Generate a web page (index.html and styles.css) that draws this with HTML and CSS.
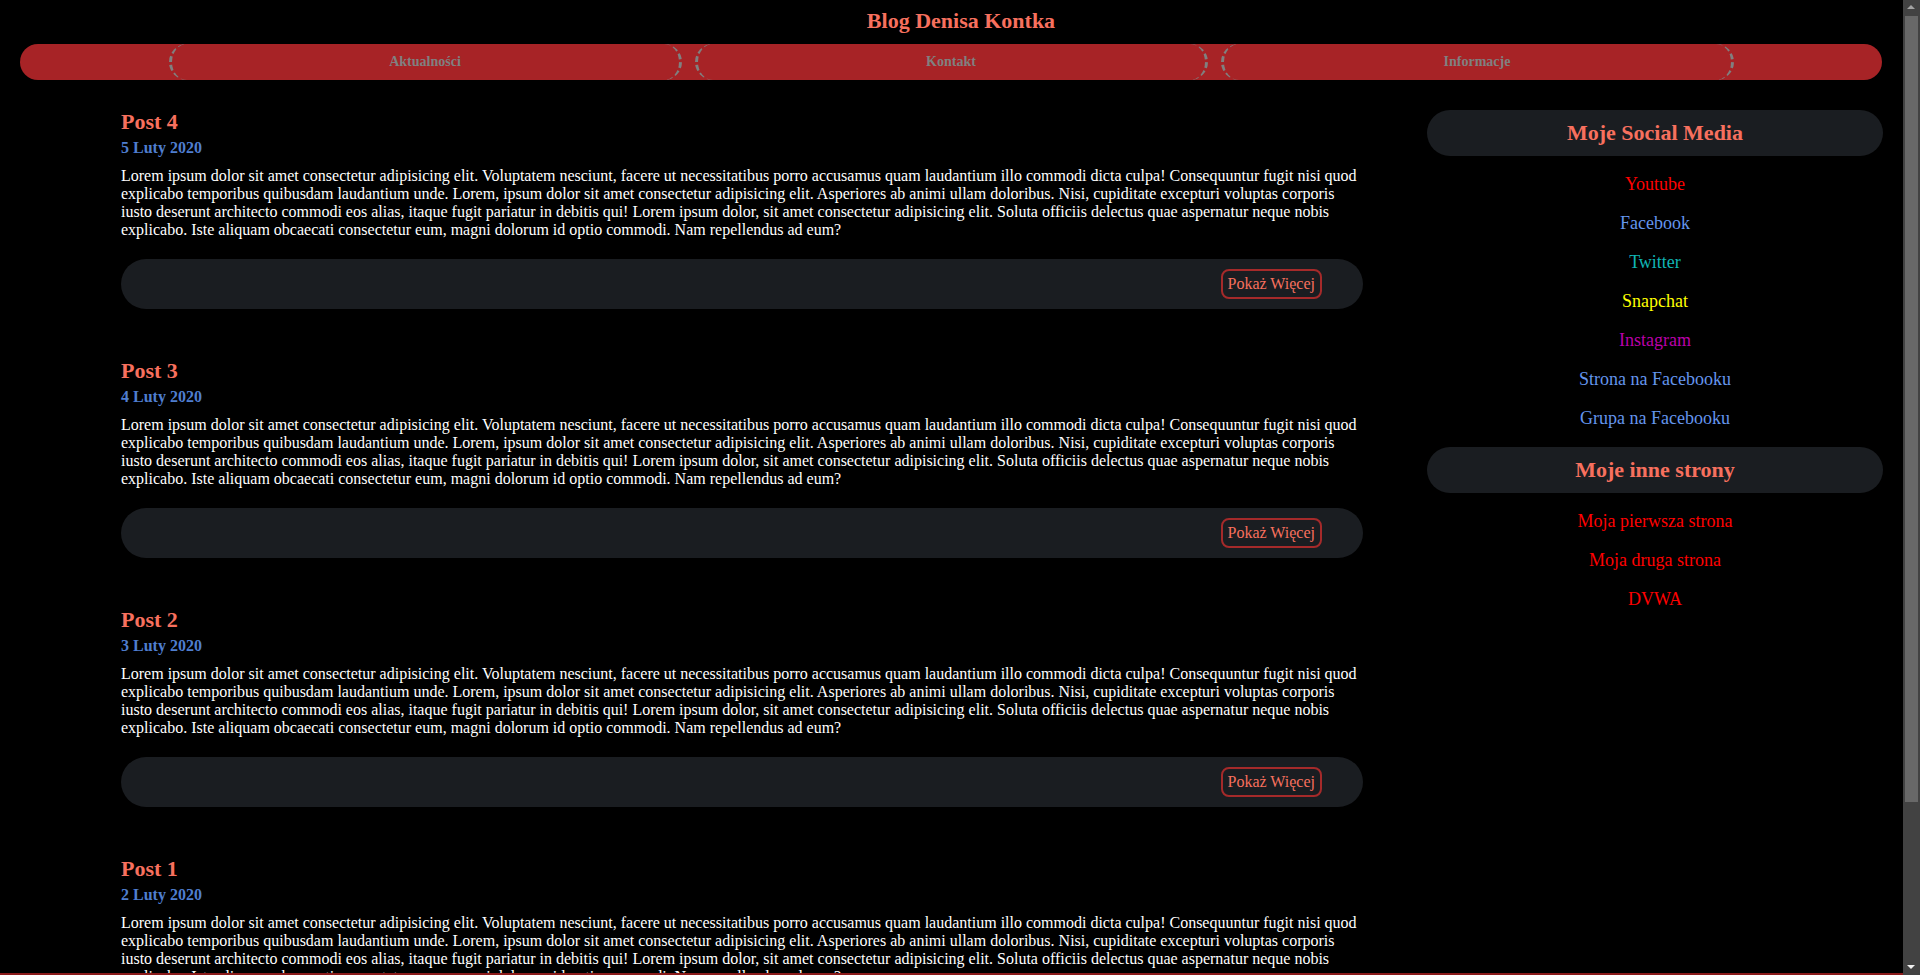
FILE: index.html
```html
<!DOCTYPE html>
<html lang="pl">
<head>
<meta charset="utf-8">
<title>Blog Denisa Kontka</title>
<link rel="stylesheet" href="styles.css">
</head>
<body>
<header class="site-header">
  <h1 class="site-title">Blog Denisa Kontka</h1>
  <nav class="nav">
    <ul class="nav-list">
      <li class="nav-item">Aktualności</li>
      <li class="nav-item">Kontakt</li>
      <li class="nav-item">Informacje</li>
    </ul>
  </nav>
</header>

<div class="layout">
  <main class="posts">
    <article class="post">
      <h2 class="post-title">Post 4</h2>
      <div class="post-date">5 Luty 2020</div>
      <p class="post-text">Lorem ipsum dolor sit amet consectetur adipisicing elit. Voluptatem nesciunt, facere ut necessitatibus porro accusamus quam laudantium illo commodi dicta culpa! Consequuntur fugit nisi quod explicabo temporibus quibusdam laudantium unde. Lorem, ipsum dolor sit amet consectetur adipisicing elit. Asperiores ab animi ullam doloribus. Nisi, cupiditate excepturi voluptas corporis iusto deserunt architecto commodi eos alias, itaque fugit pariatur in debitis qui! Lorem ipsum dolor, sit amet consectetur adipisicing elit. Soluta officiis delectus quae aspernatur neque nobis explicabo. Iste aliquam obcaecati consectetur eum, magni dolorum id optio commodi. Nam repellendus ad eum?</p>
      <div class="post-bar"><button class="more-btn">Pokaż Więcej</button></div>
    </article>
    <article class="post">
      <h2 class="post-title">Post 3</h2>
      <div class="post-date">4 Luty 2020</div>
      <p class="post-text">Lorem ipsum dolor sit amet consectetur adipisicing elit. Voluptatem nesciunt, facere ut necessitatibus porro accusamus quam laudantium illo commodi dicta culpa! Consequuntur fugit nisi quod explicabo temporibus quibusdam laudantium unde. Lorem, ipsum dolor sit amet consectetur adipisicing elit. Asperiores ab animi ullam doloribus. Nisi, cupiditate excepturi voluptas corporis iusto deserunt architecto commodi eos alias, itaque fugit pariatur in debitis qui! Lorem ipsum dolor, sit amet consectetur adipisicing elit. Soluta officiis delectus quae aspernatur neque nobis explicabo. Iste aliquam obcaecati consectetur eum, magni dolorum id optio commodi. Nam repellendus ad eum?</p>
      <div class="post-bar"><button class="more-btn">Pokaż Więcej</button></div>
    </article>
    <article class="post">
      <h2 class="post-title">Post 2</h2>
      <div class="post-date">3 Luty 2020</div>
      <p class="post-text">Lorem ipsum dolor sit amet consectetur adipisicing elit. Voluptatem nesciunt, facere ut necessitatibus porro accusamus quam laudantium illo commodi dicta culpa! Consequuntur fugit nisi quod explicabo temporibus quibusdam laudantium unde. Lorem, ipsum dolor sit amet consectetur adipisicing elit. Asperiores ab animi ullam doloribus. Nisi, cupiditate excepturi voluptas corporis iusto deserunt architecto commodi eos alias, itaque fugit pariatur in debitis qui! Lorem ipsum dolor, sit amet consectetur adipisicing elit. Soluta officiis delectus quae aspernatur neque nobis explicabo. Iste aliquam obcaecati consectetur eum, magni dolorum id optio commodi. Nam repellendus ad eum?</p>
      <div class="post-bar"><button class="more-btn">Pokaż Więcej</button></div>
    </article>
    <article class="post">
      <h2 class="post-title">Post 1</h2>
      <div class="post-date">2 Luty 2020</div>
      <p class="post-text">Lorem ipsum dolor sit amet consectetur adipisicing elit. Voluptatem nesciunt, facere ut necessitatibus porro accusamus quam laudantium illo commodi dicta culpa! Consequuntur fugit nisi quod explicabo temporibus quibusdam laudantium unde. Lorem, ipsum dolor sit amet consectetur adipisicing elit. Asperiores ab animi ullam doloribus. Nisi, cupiditate excepturi voluptas corporis iusto deserunt architecto commodi eos alias, itaque fugit pariatur in debitis qui! Lorem ipsum dolor, sit amet consectetur adipisicing elit. Soluta officiis delectus quae aspernatur neque nobis explicabo. Iste aliquam obcaecati consectetur eum, magni dolorum id optio commodi. Nam repellendus ad eum?</p>
      <div class="post-bar"><button class="more-btn">Pokaż Więcej</button></div>
    </article>
  </main>

  <aside class="sidebar">
    <div class="side-box"><h2 class="side-title">Moje Social Media</h2></div>
    <p class="side-link"><a class="link-youtube" href="#">Youtube</a></p>
    <p class="side-link"><a class="link-facebook" href="#">Facebook</a></p>
    <p class="side-link"><a class="link-twitter" href="#">Twitter</a></p>
    <p class="side-link"><a class="link-snapchat" href="#">Snapchat</a></p>
    <p class="side-link"><a class="link-instagram" href="#">Instagram</a></p>
    <p class="side-link"><a class="link-facebook" href="#">Strona na Facebooku</a></p>
    <p class="side-link"><a class="link-facebook" href="#">Grupa na Facebooku</a></p>
    <div class="side-box"><h2 class="side-title">Moje inne strony</h2></div>
    <p class="side-link"><a class="link-red" href="#">Moja pierwsza strona</a></p>
    <p class="side-link"><a class="link-red" href="#">Moja druga strona</a></p>
    <p class="side-link"><a class="link-red" href="#">DVWA</a></p>
  </aside>
</div>
<div class="bottom-line"></div>
<div class="scrollbar" aria-hidden="true">
  <span class="scroll-arrow-up"></span>
  <span class="scroll-thumb"></span>
  <span class="scroll-arrow-down"></span>
</div>
</body>
</html>
```

FILE: styles.css
```css
:root {
  color-scheme: dark;
}

body {
  margin: 8px 25px 8px 8px;
  background: #000;
  color: #fff;
  font-family: "Liberation Serif", "Times New Roman", serif;
  font-size: 16px;
}

.site-title {
  margin: 0;
  padding-left: 19px;
  text-align: center;
  font-size: 22px;
  font-weight: bold;
  color: #f7705e;
  line-height: normal;
}

.nav {
  margin: 10px 13px 0 12px;
  height: 36px;
  background: #a72326;
  border-radius: 18px;
}

.nav-list {
  list-style: none;
  margin: 0;
  padding: 0;
  height: 100%;
  display: flex;
  justify-content: center;
  gap: 13px;
}

.nav-item {
  box-sizing: border-box;
  width: 513px;
  height: 36px;
  border-left: 3px dashed #808080;
  border-right: 3px dashed #808080;
  border-radius: 18px;
  text-align: center;
  line-height: 36px;
  font-size: 14px;
  font-weight: bold;
  color: #808080;
}

.layout {
  display: grid;
  grid-template-columns: 1242px 456px;
  column-gap: 64px;
  padding: 29px 12px 55px 113px;
  align-items: start;
}

.sidebar {
  margin-top: 1px;
}

.post {
  margin-bottom: 49px;
}

.post-title {
  margin: 0;
  font-size: 22px;
  font-weight: bold;
  color: #f7705e;
  line-height: normal;
}

.post-date {
  margin-top: 4px;
  font-weight: bold;
  color: #4f7ecf;
}

.post-text {
  margin: 10px 0 20px;
  color: #fff;
}

.post-bar {
  height: 50px;
  background: #1a1d21;
  border-radius: 25px;
  display: flex;
  justify-content: flex-end;
  align-items: center;
  padding-right: 41px;
}

.more-btn {
  font-family: "Liberation Serif", "Times New Roman", serif;
  font-size: 16px;
  color: #f7705e;
  background: transparent;
  border: 2px solid #a52a2a;
  border-radius: 8px;
  padding: 4px 5px;
  line-height: normal;
}

.side-box {
  background: #1a1d21;
  border-radius: 23px;
  padding: 10px;
}

.side-title {
  margin: 0;
  text-align: center;
  font-size: 22px;
  line-height: 26px;
  font-weight: bold;
  color: #f7705e;
}

.side-link {
  margin: 18px 0;
  text-align: center;
  font-size: 18px;
  line-height: 21px;
}

.side-link a {
  text-decoration: none;
}

.link-youtube { color: #ff0000; }
.link-facebook { color: #6495ed; }
.link-twitter { color: #10b4b4; }
.link-snapchat { color: #ffff00; }
.link-instagram { color: #bb00aa; }
.link-red { color: #ff0000; }

.bottom-line {
  position: fixed;
  left: 0;
  right: 17px;
  bottom: 0;
  height: 2px;
  background: #8b1a1a;
}

.scrollbar {
  position: fixed;
  top: 0;
  right: 0;
  bottom: 0;
  width: 17px;
  background: #424242;
}

.scroll-thumb {
  position: absolute;
  left: 2px;
  right: 2px;
  top: 16px;
  height: 786px;
  background: #686868;
}

.scroll-arrow-up {
  position: absolute;
  top: 5px;
  left: 4px;
  width: 0;
  height: 0;
  border-left: 4px solid transparent;
  border-right: 4px solid transparent;
  border-bottom: 4px solid #a3a3a3;
}

.scroll-arrow-down {
  position: absolute;
  bottom: 6px;
  left: 4px;
  width: 0;
  height: 0;
  border-left: 4px solid transparent;
  border-right: 4px solid transparent;
  border-top: 4px solid #f0f0f0;
}
```
